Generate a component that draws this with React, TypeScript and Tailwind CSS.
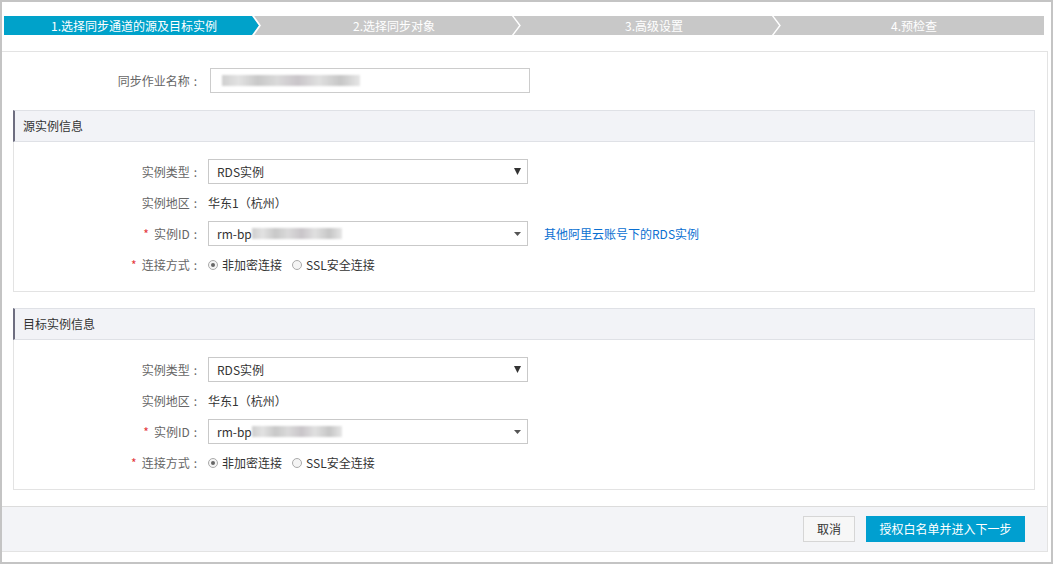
import React from "react";

const steps = ["1.选择同步通道的源及目标实例", "2.选择同步对象", "3.高级设置", "4.预检查"];

function Steps() {
  return (
    <div className="ml-[2px] mt-[14px] flex h-[19px] w-[1040px] bg-[#c8c8c8]">
      {steps.map((s, i) => (
        <div
          key={s}
          className={
            "relative flex h-full w-[260px] items-center justify-center text-[12px] text-white " +
            (i === 0 ? "bg-[#00a2ca]" : "")
          }
        >
          <span className="relative z-10">{s}</span>
          {i === 0 && (
            <svg className="absolute right-0 top-0 z-10" width="12" height="19" viewBox="0 0 12 19">
              <polygon points="0,0 12,0 12,19 0,19 7,9.5" fill="#c8c8c8" />
              <polyline points="0.5,-1 8,9.5 0.5,20" fill="none" stroke="#fff" strokeWidth="1.6" />
            </svg>
          )}
          {(i === 1 || i === 2) && (
            <svg className="absolute right-[1px] top-0 z-10" width="12" height="19" viewBox="0 0 12 19">
              <polyline points="1,-1 9,9.5 1,20" fill="none" stroke="#fff" strokeWidth="1.4" />
            </svg>
          )}
        </div>
      ))}
    </div>
  );
}

function Blur({ w }: { w: string }) {
  return (
    <span
      className={
        "inline-block h-[11px] blur-[1.2px] bg-[linear-gradient(90deg,#cfcfcf_0%,#e2e2e2_12%,#c8c8c8_26%,#dadada_40%,#c9c5c9_55%,#e0e0e0_70%,#c6c6c6_86%,#e6e6e6_100%)] " +
        w
      }
    />
  );
}

function Label({ text, req }: { text: string; req?: boolean }) {
  return (
    <div className="flex w-[186px] shrink-0 items-center justify-end text-[12px] text-[#666]">
      {req && <span className="mr-[5px] text-[#e4393c]">*</span>}
      <span>{text}</span>
      <span className="ml-[4px] mr-[3px]">:</span>
    </div>
  );
}

function Radio({ on, label }: { on?: boolean; label: string }) {
  return (
    <div className="flex items-center">
      <span className="flex h-[10px] w-[10px] items-center justify-center rounded-full border border-[#aaa] bg-[#f4f4f4]">
        {on && <span className="h-[4px] w-[4px] rounded-full bg-[#666]" />}
      </span>
      <span className="ml-[4px] text-[12px] text-[#333]">{label}</span>
    </div>
  );
}

function Panel({ title, link }: { title: string; link?: boolean }) {
  return (
    <div className="ml-[11px] mr-[12px]">
      <div className="flex h-[32px] items-center border-y border-r border-l-2 border-y-[#dfe1e6] border-r-[#dfe1e6] border-l-[#6e6e80] bg-[#f2f3f7] pl-[8px] text-[12px] text-[#333]">
        {title}
      </div>
      <div className="flex flex-col gap-[6px] border-x border-b border-[#e3e3e3] pb-[14px] pt-[17px]">
        <div className="flex h-[25px] items-center">
          <Label text="实例类型" />
          <div className="ml-[8px] flex h-[25px] w-[320px] items-center justify-between border border-[#c9c9c9] pl-[8px] pr-[6px] text-[12px] text-[#333]">
            <span>RDS实例</span>
            <svg width="7" height="7" viewBox="0 0 7 7">
              <polygon points="0,0 7,0 3.5,7" fill="#333" />
            </svg>
          </div>
        </div>
        <div className="flex h-[25px] items-center">
          <Label text="实例地区" />
          <span className="ml-[8px] text-[12px] text-[#333]">华东1（杭州）</span>
        </div>
        <div className="flex h-[25px] items-center">
          <Label text="实例ID" req />
          <div className="ml-[8px] flex h-[25px] w-[320px] items-center justify-between border border-[#c9c9c9] pl-[8px] pr-[6px] text-[12px] text-[#333]">
            <span className="flex items-center">
              rm-bp
              <Blur w="w-[90px]" />
            </span>
            <svg width="7" height="4" viewBox="0 0 7 4">
              <polygon points="0,0 7,0 3.5,4" fill="#555" />
            </svg>
          </div>
          {link && <span className="ml-[16px] text-[12px] text-[#0a6fd1]">其他阿里云账号下的RDS实例</span>}
        </div>
        <div className="flex h-[25px] items-center">
          <Label text="连接方式" req />
          <div className="ml-[8px] flex items-center gap-[10px]">
            <Radio on label="非加密连接" />
            <Radio label="SSL安全连接" />
          </div>
        </div>
      </div>
    </div>
  );
}

export default function App() {
  return (
    <div className="flex h-[564px] w-[1053px] flex-col border-2 border-[#c4c4c4] bg-white font-['Noto_Sans_CJK_SC','Microsoft_YaHei',sans-serif]">
      <Steps />
      <div className="mr-[3px] mt-[16px] flex h-[501px] flex-col border-y border-r border-[#e3e3e3]">
        <div className="mt-[16px] flex h-[25px] items-center">
          <div className="flex w-[198px] shrink-0 items-center justify-end text-[12px] text-[#666]">
            <span>同步作业名称</span>
            <span className="ml-[4px] mr-[3px]">:</span>
          </div>
          <div className="ml-[10px] flex h-[25px] w-[320px] items-center border border-[#ccc] pl-[11px]">
            <Blur w="w-[138px]" />
          </div>
        </div>
        <div className="mt-[17px]">
          <Panel title="源实例信息" link />
        </div>
        <div className="mt-[16px]">
          <Panel title="目标实例信息" />
        </div>
        <div className="mt-[16px] flex flex-1 justify-end gap-[11px] border-t border-[#dcdcdc] bg-[#f3f4f7] pr-[22px] pt-[9px]">
          <button className="h-[26px] w-[52px] border border-[#d6d6d6] bg-[#f7f7f7] text-[12px] text-[#333]">取消</button>
          <button className="h-[26px] w-[159px] bg-[#009fd0] text-[12px] text-white">授权白名单并进入下一步</button>
        </div>
      </div>
    </div>
  );
}
